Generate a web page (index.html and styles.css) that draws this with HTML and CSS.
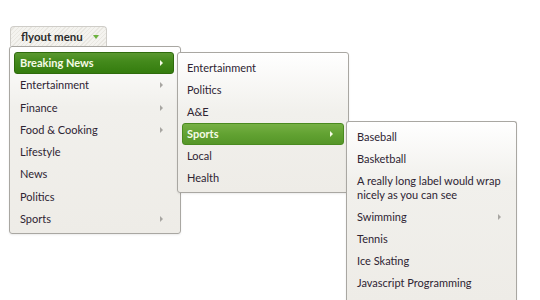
FILE: index.html
```html
<!DOCTYPE html>
<html lang="en">

<head>
  <meta charset="UTF-8">
  <title>Flyout Menu</title>
  <link rel="stylesheet" href="styles.css">
</head>

<body>
  <div class="flyout">
    <button class="flyout-btn">flyout menu <span class="caret"></span></button>

    <ul class="menu menu-root">
      <li class="item has-sub active">
        <a href="#">Breaking News</a>
        <ul class="menu menu-sub">
          <li class="item"><a href="#">Entertainment</a></li>
          <li class="item"><a href="#">Politics</a></li>
          <li class="item"><a href="#">A&amp;E</a></li>
          <li class="item has-sub active light">
            <a href="#">Sports</a>
            <ul class="menu menu-sub menu-sub-2">
              <li class="item"><a href="#">Baseball</a></li>
              <li class="item"><a href="#">Basketball</a></li>
              <li class="item"><a href="#">A really long label would wrap nicely as you can see</a></li>
              <li class="item has-sub"><a href="#">Swimming</a></li>
              <li class="item"><a href="#">Tennis</a></li>
              <li class="item"><a href="#">Ice Skating</a></li>
              <li class="item"><a href="#">Javascript Programming</a></li>
            </ul>
          </li>
          <li class="item"><a href="#">Local</a></li>
          <li class="item"><a href="#">Health</a></li>
        </ul>
      </li>
      <li class="item has-sub"><a href="#">Entertainment</a></li>
      <li class="item has-sub"><a href="#">Finance</a></li>
      <li class="item has-sub"><a href="#">Food &amp; Cooking</a></li>
      <li class="item"><a href="#">Lifestyle</a></li>
      <li class="item"><a href="#">News</a></li>
      <li class="item"><a href="#">Politics</a></li>
      <li class="item has-sub"><a href="#">Sports</a></li>
    </ul>
  </div>
</body>

</html>
```

FILE: styles.css
```css
* {
  margin: 0;
  padding: 0;
  box-sizing: border-box;
}

html,
body {
  height: 100%;
}

body {
  font-family: Lato, 'Open Sans', sans-serif;
  font-size: 11px;
  background: white;
  color: #2e2433;
  padding: 26px 0 0 9px;
  overflow: hidden;
}

.flyout {
  display: inline-block;
}

.flyout-btn {
  display: flex;
  align-items: center;
  gap: 10px;
  margin-left: 1px;
  height: 20px;
  padding: 0 7px 0 10px;
  border: 1px solid #cfcdc8;
  border-bottom: none;
  border-radius: 4px 4px 0 0;
  background: repeating-linear-gradient(135deg, #f4f3ef 0, #f4f3ef 2px, #e9e7e1 2px, #e9e7e1 3px);
  font-family: inherit;
  font-size: 11.5px;
  font-weight: bold;
  color: #2b2b2b;
}

.caret {
  width: 0;
  height: 0;
  border-left: 3.5px solid transparent;
  border-right: 3.5px solid transparent;
  border-top: 4px solid #6cb23e;
}

.menu {
  list-style: none;
  width: 172px;
  padding: 5px 6px 3px 4px;
  border: 1px solid #a9a7a2;
  border-radius: 3px;
  background: linear-gradient(#ffffff 0, #f1f0ec 60px, #eeece7 100%);
  box-shadow: 0 1px 2px rgba(0, 0, 0, 0.08);
}

.menu-sub {
  position: absolute;
  top: 0;
  left: calc(100% + 3px);
  padding: 4px 4px 3px;
  z-index: 2;
}

.menu-sub-2 {
  top: -2px;
  left: calc(100% + 2px);
  width: 171px;
  height: 180px;
  border-bottom: none;
  border-radius: 3px 3px 0 0;
}

.item {
  position: relative;
}

.item a {
  display: block;
  padding: 3px 10px 3px 5px;
  line-height: 14.3px;
  color: inherit;
  text-decoration: none;
  border: 1px solid transparent;
  border-radius: 3px;
}

.menu-sub .item a {
  padding-left: 4px;
  line-height: 14px;
}

.menu-sub-2 .item a {
  padding-left: 5px;
}

.has-sub > a::after {
  content: '';
  position: absolute;
  right: 11px;
  top: 8px;
  border-top: 3px solid transparent;
  border-bottom: 3px solid transparent;
  border-left: 3px solid #a8a6a2;
}

.active > a {
  color: #f6fbe6;
  font-weight: bold;
  background: linear-gradient(#5a9830 0, #448a1c 40%, #347c0e 100%);
  border-color: #2e6b0c;
}

.active.light > a {
  background: linear-gradient(#76b044, #62a232 50%, #559628 100%);
  border-color: #4a8a20;
}

.active > a::after {
  border-left-color: #f6fbe6;
}
```
